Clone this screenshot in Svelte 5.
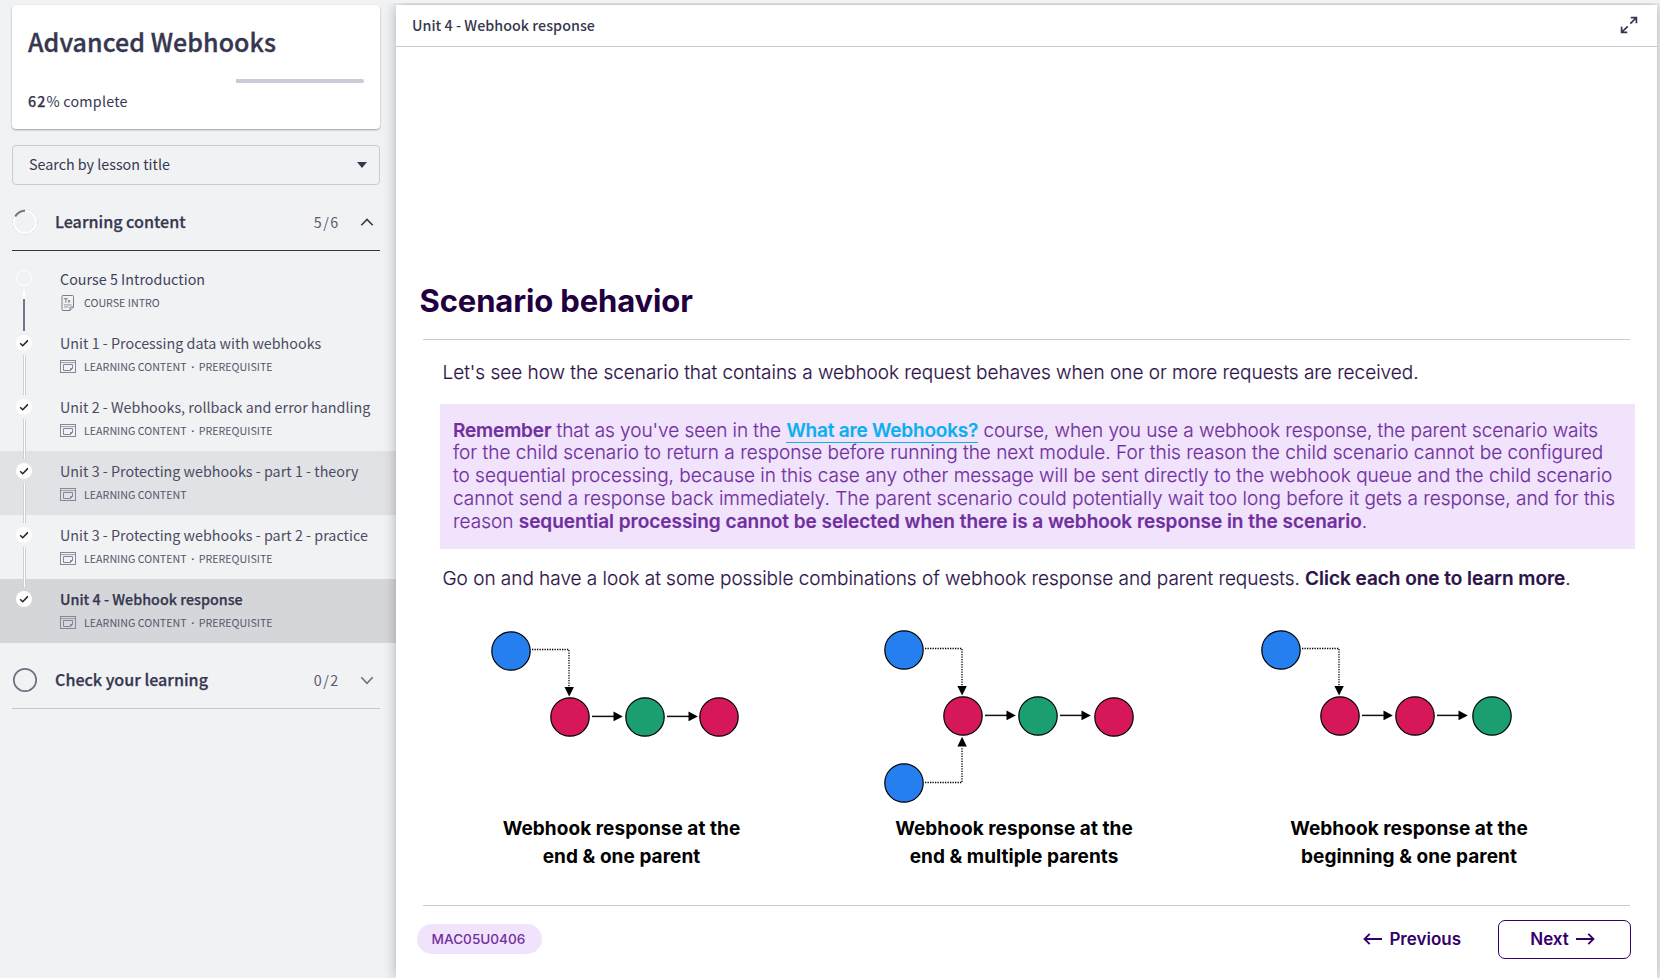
<script>
  const lessons = [
    { title: 'Course 5 Introduction', meta: ['COURSE INTRO'], kind: 'doc', state: 'open' },
    { title: 'Unit 1 - Processing data with webhooks', meta: ['LEARNING CONTENT', 'PREREQUISITE'], kind: 'page', state: 'done' },
    { title: 'Unit 2 - Webhooks, rollback and error handling', meta: ['LEARNING CONTENT', 'PREREQUISITE'], kind: 'page', state: 'done' },
    { title: 'Unit 3 - Protecting webhooks - part 1 - theory', meta: ['LEARNING CONTENT'], kind: 'page', state: 'done', tone: 'hover' },
    { title: 'Unit 3 - Protecting webhooks - part 2 - practice', meta: ['LEARNING CONTENT', 'PREREQUISITE'], kind: 'page', state: 'done' },
    { title: 'Unit 4 - Webhook response', meta: ['LEARNING CONTENT', 'PREREQUISITE'], kind: 'page', state: 'done', tone: 'current' }
  ];

  const blue = '#267fee';
  const red = '#d6185b';
  const green = '#1b9e70';

  // Node and arrow coordinates are relative to each diagram's own canvas.
  const diagrams = [
    {
      nodes: [[51, 51, blue], [110, 117, red], [185, 117, green], [259, 117, red]],
      dotted: ['M72 49.5H109V87'],
      heads: ['M104.5 87h9.4l-4.7 9.6z'],
      arrows: [[132, 116], [207, 116]],
      caption: ['Webhook response at the', 'end & one parent']
    },
    {
      nodes: [[44, 50, blue], [103, 116, red], [178, 116, green], [254, 117, red], [44, 183, blue]],
      dotted: ['M65 48.5H102V86', 'M65 182.5H102V147'],
      heads: ['M97.4 86h9.4l-4.7 9.6z', 'M97.4 146.4h9.4l-4.7-9.6z'],
      arrows: [[125, 115], [200, 115]],
      caption: ['Webhook response at the', 'end & multiple parents']
    },
    {
      nodes: [[41, 50, blue], [100, 116, red], [175, 116, red], [252, 116, green]],
      dotted: ['M62 48.5H99V86'],
      heads: ['M94.4 86h9.4l-4.7 9.6z'],
      arrows: [[122, 115], [197, 115]],
      caption: ['Webhook response at the', 'beginning & one parent']
    }
  ];
</script>

<div class="app">
  <aside>
    <section class="course">
      <h1>Advanced Webhooks</h1>
      <div class="progress"><div class="rest" style="width: 38.1%"></div></div>
      <p><b>62</b>% complete</p>
    </section>

    <div class="search">
      <span>Search by lesson title</span>
      <svg width="10" height="6" viewBox="0 0 10 6"><path d="M0 0h10L5 6z" fill="#36374f" /></svg>
    </div>

    <header class="group open">
      <svg width="26" height="26" viewBox="0 0 26 26" fill="none">
        <circle cx="13" cy="13" r="12" stroke="#c0c1ca" stroke-width=".8" stroke-dasharray="2.5 2" />
        <circle cx="13" cy="13" r="11.2" stroke="#fff" stroke-width="1.6" />
        <path d="M3.2 7.6A11.3 11.3 0 0 1 13 1.7" stroke="#6f7082" stroke-width="2" />
      </svg>
      <h2>Learning content</h2>
      <span class="count">5/6</span>
      <svg width="14" height="9" viewBox="0 0 14 9" fill="none"><path d="M1.3 7.2L7 1.400l5.700 5.800" stroke="#36374f" stroke-width="1.6" /></svg>
    </header>

    <ol>
      {#each lessons as lesson, i}
        <li class={lesson.tone ?? ''}>
          <div class="track" class:first={i === 0}>
            {#if lesson.state === 'done'}
              <svg width="16" height="16" viewBox="0 0 16 16"><circle cx="8" cy="8" r="8" fill="#fff" /><path d="M4.200 8.300l2.500 2.400 5.200-5.300" fill="none" stroke="#222" stroke-width="1.5" /></svg>
            {:else}
              <svg width="16" height="16" viewBox="0 0 16 16"><circle cx="8" cy="8" r="7.500" fill="none" stroke="#fff" /></svg>
            {/if}
            {#if i < lessons.length - 1}<i class="link"></i>{/if}
          </div>
          <div class="text">
            <div class="name">{lesson.title}</div>
            <div class="meta">
              {#if lesson.kind === 'doc'}
                <svg width="16" height="16" viewBox="0 0 16 16" fill="none" stroke="#7c7d90">
                  <path d="M3 .5h9.500a1 1 0 0 1 1 1V12l-3.500 3.500H3a1 1 0 0 1-1-1v-13a1 1 0 0 1 1-1zM13.500 12H10v3.500" />
                  <path d="M3.800 3.700h4M5.800 3.700v4M8 5l2 2.700M10 5L8 7.700" />
                  <path d="M4 9.900h7.500M4 12h4.500" stroke-width=".8" />
                </svg>
              {:else}
                <svg width="16" height="16" viewBox="0 0 16 16" fill="none" stroke="#85869a">
                  <rect x=".5" y="1.500" width="15" height="12" />
                  <path d="M.5 3.600h15" stroke-width=".8" />
                  <path d="M3.500 5.500h9v4l-2 2h-7zM12.500 9.500h-2v2" />
                </svg>
              {/if}
              <span>{lesson.meta[0]}</span>
              {#if lesson.meta[1]}<span class="dot">·</span><span>{lesson.meta[1]}</span>{/if}
            </div>
          </div>
        </li>
      {/each}
    </ol>

    <header class="group">
      <svg width="26" height="26" viewBox="0 0 26 26" fill="none"><circle cx="13" cy="13" r="11.200" stroke="#6f7082" stroke-width="1.700" /></svg>
      <h2>Check your learning</h2>
      <span class="count">0/2</span>
      <svg width="14" height="9" viewBox="0 0 14 9" fill="none"><path d="M1.300 1.300L7 7.400l5.700-6.100" stroke="#6f7082" stroke-width="1.600" /></svg>
    </header>
  </aside>

  <main>
    <header class="bar">
      <span>Unit 4 - Webhook response</span>
      <svg width="18" height="18" viewBox="0 0 18 18" fill="none" stroke="#36374f" stroke-width="1.700">
        <path d="M10.300 7.700L16 2M10.700 1.700h5.700v5.600M7.700 10.300L2 16M1.600 10.700v5.700h5.700" />
      </svg>
    </header>

    <article>
      <h3>Scenario behavior</h3>
      <hr />
      <p class="lead">Let's see how the scenario that contains a webhook request behaves when one or more requests are received.</p>
      <div class="callout">
        <div class="opening"><b>Remember</b> that as you've seen in the <a href="#webhooks">What are Webhooks?</a> course, when you use a webhook response, the parent scenario waits</div>
        <div>for the child scenario to return a response before running the next module. For this reason the child scenario cannot be configured</div>
        <div>to sequential processing, because in this case any other message will be sent directly to the webhook queue and the child scenario</div>
        <div>cannot send a response back immediately. The parent scenario could potentially wait too long before it gets a response, and for this</div>
        <div>reason <b>sequential processing cannot be selected when there is a webhook response in the scenario</b>.</div>
      </div>
      <p class="lead">Go on and have a look at some possible combinations of webhook response and parent requests. <b>Click each one to learn more</b>.</p>

      <div class="cards">
        {#each diagrams as d}
          <figure>
            <svg width="323" height="214" viewBox="0 0 323 214">
              {#each d.dotted as path}<path d={path} fill="none" stroke="#000" stroke-width="1.300" stroke-dasharray="1.300 1.200" />{/each}
              {#each d.heads as path}<path d={path} />{/each}
              {#each d.arrows as [x, y]}
                <path d="M{x} {y + 0.4}h23" stroke="#111" stroke-width="1.500" />
                <path d="M{x + 21.500} {y - 4.500}v9.800l9.300-4.900z" />
              {/each}
              {#each d.nodes as [x, y, fill]}<circle cx={x} cy={y} r="19.200" {fill} stroke="#000" stroke-width="1.200" />{/each}
            </svg>
            <figcaption>{d.caption[0]}<br />{d.caption[1]}</figcaption>
          </figure>
        {/each}
      </div>
      <hr />

      <footer>
        <span class="pill">MAC05U0406</span>
        <button class="prev">
          <svg width="20" height="12" viewBox="0 0 20 12" fill="none" stroke="#32006b" stroke-width="1.800"><path d="M19 6H1.500M6.700.8L1.500 6l5.200 5.200" /></svg>
          Previous
        </button>
        <button class="next">
          Next
          <svg width="20" height="12" viewBox="0 0 20 12" fill="none" stroke="#32006b" stroke-width="1.800"><path d="M1 6h17.500M13.300.8L18.500 6l-5.200 5.200" /></svg>
        </button>
      </footer>
    </article>
  </main>
</div>

<style>
  :global(body) { background: #f1f2f4; overflow: hidden; }
  * { box-sizing: border-box; }
  h1, h2, h3, p, ol, figure { margin: 0; padding: 0; }
  .app { display: flex; height: 978px; padding-top: 5px; color: #36374f; background: #f1f2f4; }
  svg { display: block; flex: none; }

  aside { width: 396px; flex: none; font-family: 'Noto Sans CJK SC', sans-serif; font-size: 14.3px; }
  .course { width: 368px; height: 124px; margin-left: 12px; padding: 18px 16px 0; background: #fff; border-radius: 4px; box-shadow: 0 1px 2px rgba(54, 55, 79, .45); }
  h1 { font-size: 25px; font-weight: 500; line-height: 36px; letter-spacing: .06px; -webkit-text-stroke: .35px; }
  .progress { display: flex; justify-content: flex-end; margin-top: 20px; }
  .rest { height: 4px; background: #cacbd6; border-radius: 0 2px 2px 0; }
  .course p { margin-top: 3px; line-height: 30px; letter-spacing: .22px; }
  .course b { font-weight: 500; letter-spacing: 1.1px; -webkit-text-stroke: .25px; }

  .search { display: flex; align-items: center; justify-content: space-between; width: 368px; height: 40px; margin: 16px 0 0 12px; padding: 0 12px 0 16px; border: 1px solid #cacbd6; border-radius: 4px; }
  .search span { padding-bottom: 3px; }

  .group { display: flex; align-items: center; width: 368px; height: 54px; margin-left: 12px; padding: 0 6px 3px 0; border-bottom: 1px solid #c6c7d3; }
  .group.open { height: 57px; margin-top: 9px; padding-bottom: 0; border-bottom-color: #36374f; }
  h2 { flex: 1; margin-left: 17px; padding-bottom: 2px; font-size: 16.1px; font-weight: 500; line-height: 24px; -webkit-text-stroke: .25px; }
  .count { margin-right: 20.5px; padding-bottom: 2px; font-size: 14.3px; letter-spacing: 1.4px; color: #5b5c70; }

  ol { list-style: none; margin: 8px 0 12px; }
  li { display: flex; height: 64px; }
  .hover { background: #e1e2e6; }
  .current { background: #d5d6da; }
  .track { display: flex; flex-direction: column; align-items: center; width: 16px; margin: 12px 28px 0 16px; }
  .track.first { margin-top: 11px; }
  .link { flex: none; width: 3px; height: 40px; margin-top: 4px; background: #fff; border: solid #cfd0d6; border-width: 0 1px; position: relative; z-index: 1; }
  .first .link { margin-top: 5px; width: 2px; border: 0; background: linear-gradient(#fff 8px, #74758a 8px); }
  .text { padding-top: 8px; }
  .name { line-height: 24px; white-space: nowrap; letter-spacing: .02px; color: #4a4b60; }
  .current .name { font-weight: 500; color: #36374f; -webkit-text-stroke: .25px; }
  li:first-child .name { color: #40415a; }
  .meta { display: flex; align-items: center; gap: 8px; margin-top: 4px; font-size: 10.7px; line-height: 16px; color: #55566b; }
  .meta .dot { width: 3px; margin: 0 -3.500px; font-family: 'Open Sans', sans-serif; font-weight: 700; }

  main { width: 1261px; height: 973px; background: #fff; box-shadow: 0 0 12px rgba(0, 0, 0, .28); clip-path: inset(-2px -3px 0 -14px); }
  .bar { display: flex; align-items: center; justify-content: space-between; height: 42px; padding: 0 19px 2px 16px; border-bottom: 1px solid #c8c9d2; font: 500 14.3px 'Noto Sans CJK SC', sans-serif; letter-spacing: .03px; }

  article { padding: 234px 22px 0 24px; font-family: Inter, sans-serif; color: #2d1349; }
  h3 { margin-left: -.5px; font-size: 31px; font-weight: 700; line-height: 40px; letter-spacing: -.12px; color: #22003f; }
  hr { width: 1207px; height: 1px; margin: 18px 0 0 2.500px; border: 0; background: #ccc8cc; }
  .lead { margin: 21px 0 0 22.500px; font-size: 19px; font-weight: 300; line-height: 24px; letter-spacing: -.03px; white-space: nowrap; -webkit-text-stroke: .15px; }
  b, a { font-weight: 600; letter-spacing: -.03px; }
  .callout { width: 1195px; height: 145px; margin: 19px 0 0 20px; padding: 15.500px 0 0 13px; background: #f0e3fb; color: #7030a0; font-size: 19px; font-weight: 300; line-height: 22.850px; letter-spacing: 0; white-space: nowrap; -webkit-text-stroke: .15px; }
  .opening { letter-spacing: -.05px; }
  .opening b { letter-spacing: -.15px; }
  .callout + .lead { margin-top: 18px; }
  a { color: #0cb0f0; text-decoration: none; letter-spacing: -.2px; border-bottom: 1.500px solid #0cb0f0; }

  .cards { display: flex; height: 305px; padding: 9px 0 0 40px; }
  figure { width: 400px; flex: none; }
  figure:nth-child(2) { width: 380px; }
  figcaption { width: 323px; padding-top: 1px; font-size: 19px; font-weight: 700; line-height: 28px; letter-spacing: .05px; text-align: center; color: #000; }
  figure:nth-child(2) figcaption { width: 308px; }
  figure:nth-child(3) figcaption { width: 338px; }
  .cards + hr { margin-top: 9px; }

  footer { display: flex; align-items: center; height: 40px; margin: 13px 4px 0 -3px; }
  .pill { margin-right: auto; width: 125px; height: 30px; padding-right: 2px; border-radius: 15px; background: #f0e3fb; color: #7030a0; font-size: 13.600px; font-weight: 500; line-height: 30px; text-align: center; }
  button { display: flex; align-items: center; gap: 6px; padding: 0; border: 0; background: none; color: #32006b; font: 600 17px Inter, sans-serif; }
  .prev { margin-right: 37px; }
  .next { width: 133px; height: 39px; padding-right: 4px; justify-content: center; border: 1.500px solid #32006b; border-radius: 7px; }
</style>
